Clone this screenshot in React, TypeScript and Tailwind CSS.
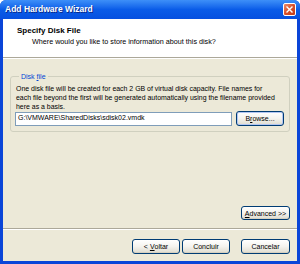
import React from "react";

const font = { fontFamily: '"Liberation Sans", Arial, sans-serif' };

function XPButton({
  children,
  className = "",
  focused = false,
}: {
  children: React.ReactNode;
  className?: string;
  focused?: boolean;
}) {
  return (
    <div
      className={
        "flex items-center justify-center rounded-[3px] border border-[#003c74] bg-gradient-to-b from-[#ffffff] via-[#f4f3ee] to-[#dedbcf] text-[7px] leading-none text-black " +
        (focused
          ? "shadow-[inset_0_0_0_1px_#b3c6f2] "
          : "shadow-[inset_0_-1px_0_#d6d0c0] ") +
        className
      }
    >
      {children}
    </div>
  );
}

export default function App() {
  return (
    <div
      className="flex h-[264px] w-[300px] flex-col overflow-hidden rounded-t-[6px] bg-[#0a45d8]"
      style={font}
    >
      {/* Title bar */}
      <div className="flex h-[19px] shrink-0 items-center justify-between bg-gradient-to-b from-[#3d8ff8] via-[#0a5ce8] to-[#0650e0] pl-[5px] pr-[4px]">
        <span className="text-[8.5px] font-bold leading-none text-white [text-shadow:1px_1px_0_#0a2a8a]">
          Add Hardware Wizard
        </span>
        <div className="flex h-[13px] w-[13px] items-center justify-center rounded-[2px] border border-white bg-gradient-to-br from-[#e98a6c] via-[#d9502a] to-[#c13c17]">
          <svg width="7" height="7" viewBox="0 0 7 7">
            <path
              d="M1 1 L6 6 M6 1 L1 6"
              stroke="white"
              strokeWidth="1.4"
              strokeLinecap="square"
            />
          </svg>
        </div>
      </div>

      {/* Body */}
      <div className="mx-[3px] mb-[3px] flex flex-1 flex-col bg-[#ece9d8]">
        {/* Header */}
        <div className="flex h-[39px] shrink-0 flex-col border-b border-[#aca899] bg-white pl-[14px] pt-[7px] shadow-[0_1px_0_#ffffff]">
          <div className="text-[8px] font-bold leading-[10px] text-black">
            Specify Disk File
          </div>
          <div className="mt-[1px] pl-[15px] text-[7.2px] leading-[10px] text-black">
            Where would you like to store information about this disk?
          </div>
        </div>

        {/* Group box */}
        <fieldset className="mx-[7px] mt-[14px] rounded-[3px] border border-[#d0d0bf] pb-[5px] pl-[4px] pr-[2px]">
          <legend className="ml-[4px] px-[2px] text-[7px] leading-[9px] text-[#0046d5]">
            Disk <span className="underline">f</span>ile
          </legend>
          <div className="mt-[3px] flex flex-col whitespace-nowrap pl-[1px] text-[6.95px] leading-[9px] text-black">
            <span>One disk file will be created for each 2 GB of virtual disk capacity. File names for</span>
            <span>each file beyond the first will be generated automatically using the filename provided</span>
            <span>here as a basis.</span>
          </div>
          <div className="flex items-center gap-[4px]">
            <div className="flex h-[14px] w-[217px] items-center border border-[#7f9db9] bg-white pl-[2px] text-[7px] text-black">
              G:\VMWARE\SharedDisks\sdisk02.vmdk
            </div>
            <XPButton focused className="h-[15px] w-[48px]">
              B<span className="underline">r</span>owse...
            </XPButton>
          </div>
        </fieldset>

        <div className="flex-1" />

        {/* Advanced */}
        <div className="flex justify-end pr-[7px]">
          <XPButton className="h-[14px] w-[49px]">
            <span className="underline">A</span>dvanced &gt;&gt;
          </XPButton>
        </div>

        {/* Separator */}
        <div className="mt-[8px] h-[1px] bg-[#aca899]" />
        <div className="h-[1px] bg-white" />

        {/* Bottom buttons */}
        <div className="mb-[7px] mt-[9px] flex justify-end pr-[7px]">
          <XPButton className="h-[15px] w-[48px]">
            &lt; <span className="ml-[2px] underline">V</span>oltar
          </XPButton>
          <XPButton className="ml-[2px] h-[15px] w-[48px]">Concluir</XPButton>
          <XPButton className="ml-[11px] h-[15px] w-[49px]">Cancelar</XPButton>
        </div>
      </div>
    </div>
  );
}
